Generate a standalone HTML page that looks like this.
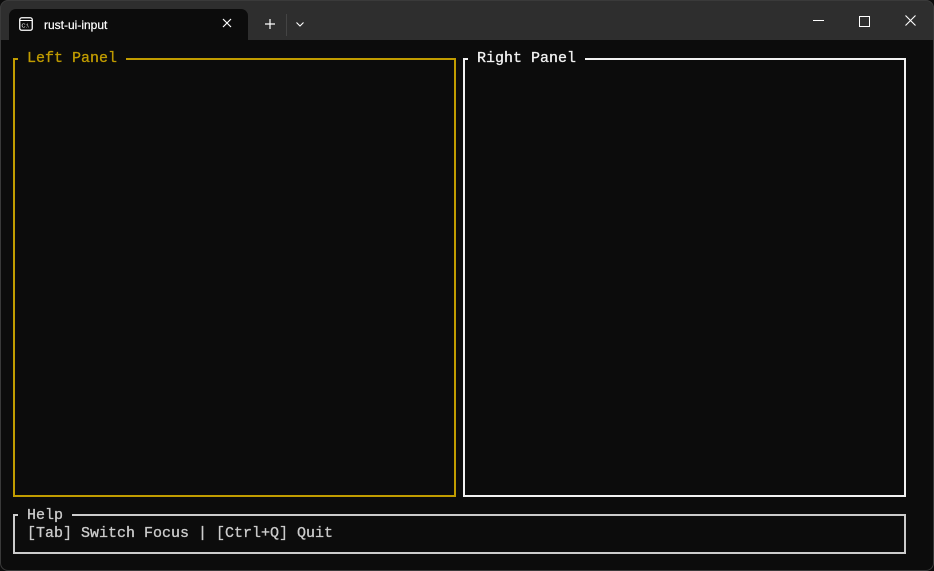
<!DOCTYPE html>
<html><head><style>
body{margin:0;width:934px;height:571px;background:#0c0c0c;overflow:hidden;position:relative;font-family:"Liberation Mono",monospace;}
.tb{position:absolute;left:0;top:0;width:934px;height:40px;background:#2e2e2e;border-radius:8px 8px 0 0;}
.tab{position:absolute;left:9px;top:9px;width:239px;height:31px;background:#0c0c0c;border-radius:7px 7px 0 0;}
.tt{position:absolute;left:44px;top:18px;color:#fff;font:12px "Liberation Sans",sans-serif;-webkit-text-stroke:0.2px #fff;}
.box{position:absolute;box-sizing:border-box;border:2px solid;}
.lbl{position:absolute;background:#0c0c0c;padding:0 9px;font-size:15px;line-height:18px;-webkit-text-stroke:0.3px currentColor;}
.frame{position:absolute;left:0;top:0;width:932px;height:569px;border:1px solid #3a3a3a;border-radius:8px;pointer-events:none;}
</style></head><body>
<div class="tb"></div>
<div class="tab"></div>
<svg style="position:absolute;left:19px;top:17px" width="14" height="14" viewBox="0 0 14 14"><rect x="0.75" y="0.75" width="12.5" height="12.5" rx="2" fill="none" stroke="#fff" stroke-width="1.3"/><line x1="1" y1="3.5" x2="13" y2="3.5" stroke="#fff" stroke-width="1"/><text x="2.5" y="10.5" font-size="5.5" fill="#fff" font-family="Liberation Sans">C:\</text></svg>
<div class="tt">rust-ui-input</div>
<svg style="position:absolute;left:222px;top:18px" width="10" height="10"><path d="M1 1L9 9M9 1L1 9" stroke="#fff" stroke-width="1.2"/></svg>
<svg style="position:absolute;left:265px;top:19px" width="10" height="10"><path d="M5 0V10M0 5H10" stroke="#fff" stroke-width="1.2"/></svg>
<div style="position:absolute;left:286px;top:14px;width:1px;height:22px;background:#444"></div>
<svg style="position:absolute;left:296px;top:22px" width="8" height="5"><path d="M0.5 0.5L4 4L7.5 0.5" stroke="#fff" fill="none" stroke-width="1.1"/></svg>
<div style="position:absolute;left:813px;top:20px;width:11px;height:1px;background:#fff"></div>
<div style="position:absolute;left:859px;top:16px;width:9px;height:9px;border:1px solid #fff"></div>
<svg style="position:absolute;left:905px;top:15px" width="11" height="11"><path d="M0.5 0.5L10.5 10.5M10.5 0.5L0.5 10.5" stroke="#fff" stroke-width="1.1"/></svg>

<div class="box" style="left:13px;top:58px;width:443px;height:439px;border-color:#c19c00"></div>
<div class="lbl" style="left:18px;top:50px;color:#c19c00">Left Panel</div>
<div class="box" style="left:463px;top:58px;width:443px;height:439px;border-color:#f2f2f2"></div>
<div class="lbl" style="left:468px;top:50px;color:#f2f2f2">Right Panel</div>
<div class="box" style="left:13px;top:514px;width:893px;height:40px;border-color:#cccccc"></div>
<div class="lbl" style="left:18px;top:507px;color:#cccccc">Help</div>
<div style="position:absolute;left:27px;top:525px;color:#cccccc;font-size:15px;line-height:18px;white-space:pre;-webkit-text-stroke:0.3px #cccccc">[Tab] Switch Focus | [Ctrl+Q] Quit</div>
<div class="frame"></div>
</body></html>
